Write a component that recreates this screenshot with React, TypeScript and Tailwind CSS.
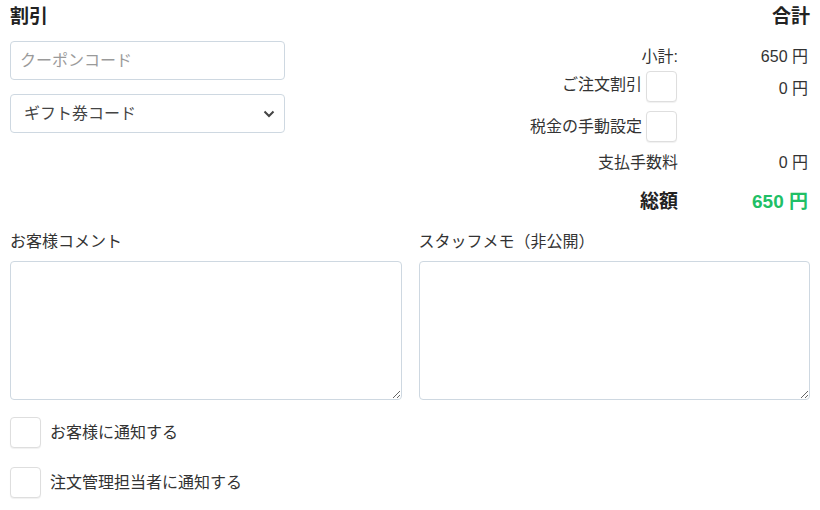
import React from "react";

const font = { fontFamily: '"Liberation Sans", "Noto Sans CJK JP", sans-serif' };

function Box({ className = "" }: { className?: string }) {
  return (
    <span
      className={
        "inline-block h-[31px] w-[31px] shrink-0 rounded-[4px] border border-[#dedede] bg-white shadow-[0_1px_1px_rgba(0,0,0,0.06)] " +
        className
      }
    />
  );
}

export default function App() {
  return (
    <div className="w-[820px] h-[510px] bg-white text-[16px] text-[#333] px-[10px]" style={font}>
      <div className="grid grid-cols-[275px_1fr]">
        {/* left */}
        <div className="flex flex-col">
          <div className="h-[34px] flex items-center text-[19px] font-bold text-[#222]">割引</div>
          <input
            className="mt-[7px] h-[39px] w-full rounded-[4px] border border-[#ced8e1] pl-[9px] text-[16px] text-[#333] placeholder:text-[#9a9a9a] outline-none"
            placeholder="クーポンコード"
          />
          <div className="relative mt-[14px] h-[39px] w-full rounded-[4px] border border-[#ced8e1] flex items-center pl-[13px] text-[#444]">
            ギフト券コード
            <svg className="absolute right-[9px] top-[15px]" width="12" height="8" viewBox="0 0 12 8">
              <path d="M1.5 1.5 L6 6 L10.5 1.5" fill="none" stroke="#444" strokeWidth="2" />
            </svg>
          </div>
        </div>
        {/* right */}
        <div className="flex flex-col">
          <div className="h-[34px] flex items-center justify-end text-[19px] font-bold text-[#222]">合計</div>
          <div className="mt-[11px] h-[24px] flex items-center">
            <div className="flex-1 text-right">小計:</div>
            <div className="w-[132px] text-right pr-[2px]">650 円</div>
          </div>
          <div className="mt-[2px] h-[31px] flex items-center">
            <div className="flex-1 flex items-center justify-end gap-[4px] pr-[1px]">
              <span className="-mt-[3px]">ご注文割引</span>
              <Box />
            </div>
            <div className="w-[132px] text-right pr-[2px] mt-[4px]">0 円</div>
          </div>
          <div className="mt-[9px] h-[31px] flex items-center">
            <div className="flex-1 flex items-center justify-end gap-[4px] pr-[1px]">
              <span>税金の手動設定</span>
              <Box />
            </div>
            <div className="w-[132px]" />
          </div>
          <div className="mt-[9px] h-[24px] flex items-center">
            <div className="flex-1 text-right">支払手数料</div>
            <div className="w-[132px] text-right pr-[2px]">0 円</div>
          </div>
          <div className="mt-[12px] h-[30px] flex items-center">
            <div className="flex-1 text-right text-[19px] font-bold text-[#222]">総額</div>
            <div className="w-[132px] text-right pr-[2px] text-[19px] font-bold text-[#21bf66]">650 円</div>
          </div>
        </div>
      </div>

      <div className="mt-[13px] grid grid-cols-2 gap-[17px]">
        <div className="flex flex-col">
          <div className="h-[24px] flex items-center">お客様コメント</div>
          <textarea className="mt-[7px] h-[139px] w-full rounded-[4px] border border-[#ced8e1] outline-none" />
        </div>
        <div className="flex flex-col">
          <div className="h-[24px] flex items-center">スタッフメモ（非公開）</div>
          <textarea className="mt-[7px] h-[139px] w-full rounded-[4px] border border-[#ced8e1] outline-none" />
        </div>
      </div>

      <div className="mt-[17px] flex items-center gap-[9px]">
        <Box />
        <span>お客様に通知する</span>
      </div>
      <div className="mt-[19px] flex items-center gap-[9px]">
        <Box />
        <span>注文管理担当者に通知する</span>
      </div>
    </div>
  );
}
